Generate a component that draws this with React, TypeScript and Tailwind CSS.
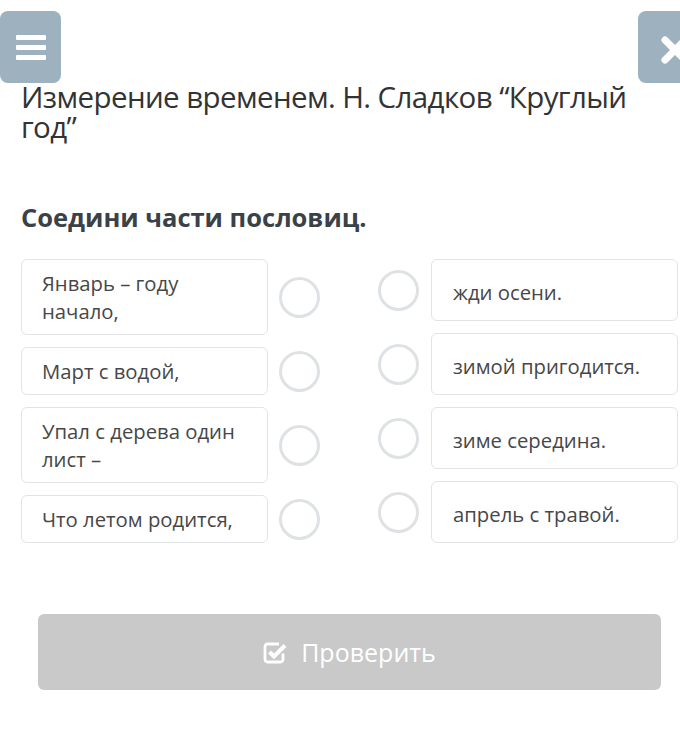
import React from "react";

const left = [
  { text: "Январь – году начало,", h: "h-[76px]" },
  { text: "Март с водой,", h: "h-[48px]" },
  { text: "Упал с дерева один лист –", h: "h-[76px]" },
  { text: "Что летом родится,", h: "h-[48px]" },
];

const right = ["жди осени.", "зимой пригодится.", "зиме середина.", "апрель с травой."];

function Circle() {
  return <div className="w-[41px] h-[41px] shrink-0 rounded-full border-[3px] border-[#dfe2e5] bg-white" />;
}

export default function App() {
  return (
    <div
      className="relative w-[680px] h-[737px] bg-white overflow-hidden"
      style={{ fontFamily: '"Open Sans", "Noto Sans", sans-serif' }}
    >
      <div className="pt-[82px] pl-[21px] pr-[40px]">
        <h1 className="text-[29.5px] leading-[30px] text-[#333] font-normal tracking-[-0.6px]">
          Измерение временем. Н. Сладков “Круглый год”
        </h1>
        <h2 className="mt-[59px] text-[25.5px] leading-[32px] font-bold text-[#3a4147]">Соедини части пословиц.</h2>
      </div>

      <div className="mt-[26px] pl-[21px] flex">
        <div className="flex flex-col gap-[12px]">
          {left.map((item, i) => (
            <div key={i} className="flex items-center gap-[11px]">
              <div
                className={`w-[247px] ${item.h} rounded-[6px] border border-[#e1e4e6] bg-white pl-[20px] pr-[14px] flex items-center text-[20.3px] leading-[28px] text-[#474747]`}
              >
                {item.text}
              </div>
              <Circle />
            </div>
          ))}
        </div>
        <div className="ml-[58px] flex flex-col gap-[12px]">
          {right.map((t, i) => (
            <div key={i} className="flex items-center gap-[12px]">
              <Circle />
              <div className="w-[247px] h-[62px] rounded-[6px] border border-[#e1e4e6] bg-white pl-[21px] pt-[3px] flex items-center text-[20.3px] leading-[28px] text-[#474747]">
                {t}
              </div>
            </div>
          ))}
        </div>
      </div>

      <div className="mt-[71px] ml-[38px] w-[623px] h-[76px] rounded-[6px] bg-[#c9c9c9] flex items-center justify-center gap-[13px] text-white">
        <svg width="25" height="24" viewBox="0 0 25 24" className="mt-[1px] shrink-0">
          <path d="M20 12.5 V18.5 A2.5 2.5 0 0 1 17.5 21 H4.5 A2.5 2.5 0 0 1 2 18.5 V5.5 A2.5 2.5 0 0 1 4.5 3 H16" fill="none" stroke="white" strokeWidth="2.8" />
          <path d="M6.5 11 L11 15.5 L22 4.5" fill="none" stroke="white" strokeWidth="4" />
        </svg>
        <span className="text-[25px] leading-[32px] font-normal">Проверить</span>
      </div>

      {/* floating buttons */}
      <div className="absolute left-0 top-[11px] w-[61px] h-[72px] rounded-[8px] bg-[#9db2be] flex flex-col items-center justify-center gap-[5px]">
        <div className="w-[30px] h-[5px] rounded-[1px] bg-white" />
        <div className="w-[30px] h-[5px] rounded-[1px] bg-white" />
        <div className="w-[30px] h-[5px] rounded-[1px] bg-white" />
      </div>
      <div className="absolute left-[638px] top-[11px] w-[61px] h-[72px] rounded-[8px] bg-[#9db2be]">
        <svg width="30" height="30" viewBox="0 0 30 30" className="absolute left-[22px] top-[24px]">
          <path d="M5 5 L25 25 M25 5 L5 25" stroke="white" strokeWidth="7" strokeLinecap="round" />
        </svg>
      </div>
    </div>
  );
}
